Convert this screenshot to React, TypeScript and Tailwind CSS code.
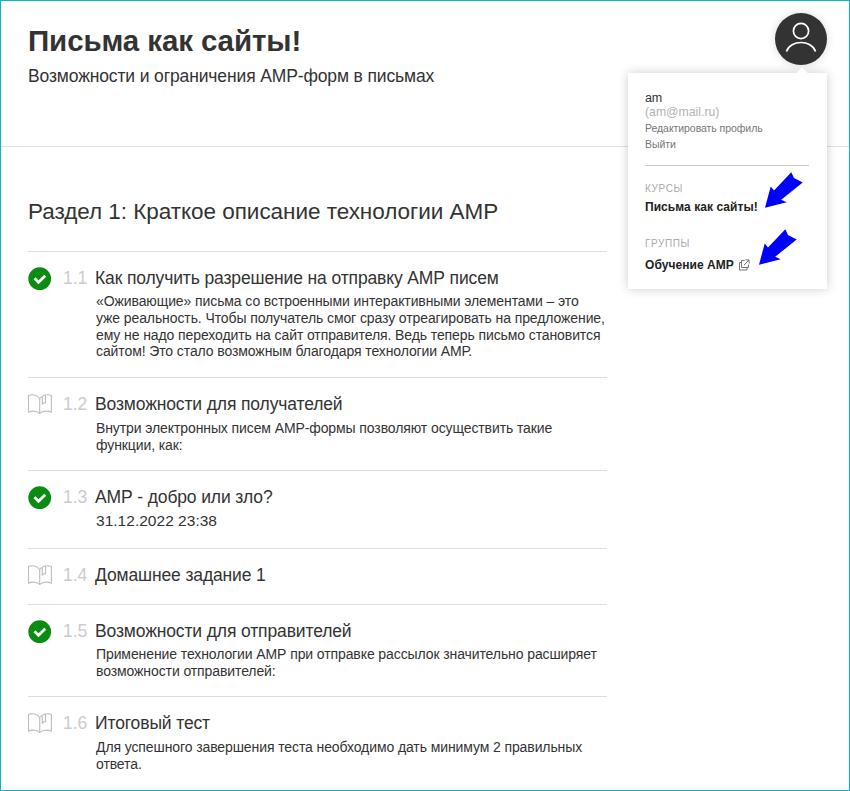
import React from "react";

type Line = { text: string; cls: string };
type Lesson = { num: string; title: string; done: boolean; rowCls: string; lines: Line[] };

const lessons: Lesson[] = [
  {
    num: "1.1",
    title: "Как получить разрешение на отправку АМР писем",
    done: true,
    rowCls: "h-[126px]",
    lines: [
      { text: "«Оживающие» письма со встроенными интерактивными элементами – это", cls: "h-[17px]" },
      { text: "уже реальность. Чтобы получатель смог сразу отреагировать на предложение,", cls: "h-[17px]" },
      { text: "ему не надо переходить на сайт отправителя. Ведь теперь письмо становится", cls: "h-[16px]" },
      { text: "сайтом! Это стало возможным благодаря технологии АМР.", cls: "h-[16px]" },
    ],
  },
  {
    num: "1.2",
    title: "Возможности для получателей",
    done: false,
    rowCls: "h-[93px]",
    lines: [
      { text: "Внутри электронных писем АМР-формы позволяют осуществить такие", cls: "h-[18px] pt-px" },
      { text: "функции, как:", cls: "h-[16px]" },
    ],
  },
  {
    num: "1.3",
    title: "АМР - добро или зло?",
    done: true,
    rowCls: "h-[78px]",
    lines: [{ text: "31.12.2022 23:38", cls: "h-[18px] pt-px text-[15.500px] tracking-[0.02px]" }],
  },
  { num: "1.4", title: "Домашнее задание 1", done: false, rowCls: "h-[56px]", lines: [] },
  {
    num: "1.5",
    title: "Возможности для отправителей",
    done: true,
    rowCls: "h-[92px]",
    lines: [
      { text: "Применение технологии АМР при отправке рассылок значительно расширяет", cls: "h-[17px]" },
      { text: "возможности отправителей:", cls: "h-[16px]" },
    ],
  },
  {
    num: "1.6",
    title: "Итоговый тест",
    done: false,
    rowCls: "h-[92px]",
    lines: [
      { text: "Для успешного завершения теста необходимо дать минимум 2 правильных", cls: "h-[18px] pt-px" },
      { text: "ответа.", cls: "h-[16px]" },
    ],
  },
];

function DoneIcon() {
  return (
    <svg className="mt-[15px] block" width="24" height="24" viewBox="0 0 24 24">
      <circle cx="11.7" cy="11.7" r="11.4" fill="#0a8c12" />
      <path d="M6.500 11.300l4 4 6.700-6.600" fill="none" stroke="#fff" strokeWidth="2.700" />
    </svg>
  );
}

function BookIcon() {
  return (
    <svg className="ml-[-1px] mt-[15px] block" width="26" height="24" viewBox="0 0 26 24" fill="none" stroke="#bdbdbd" strokeWidth="1.1" strokeLinejoin="round">
      <path d="M12.700 5.500C10.500 2 5 .8 1.500 2.500v16.800C5 17.400 10.500 18 12.700 20.500 15 18 20.500 17.400 24.400 19.300V2.500C20.500 .8 15 2 12.700 5.500z" />
      <path d="M12.700 5.500v15.200M15.300 3.200v8.100l1.600-1.600H18.500V2" />
    </svg>
  );
}

function Arrow({ className }: { className: string }) {
  return (
    <svg className={className} width="40" height="38" viewBox="0 0 40 38">
      <path d="M1 36.700L6.700 15.500 10 19.500 27.300 1.200 30 7 38.700 11.600 17.200 28.700 22.700 31.300z" fill="#0000fe" />
    </svg>
  );
}

function ProfileMenu() {
  return (
    <div className="absolute left-[627px] top-[72px] h-[216px] w-[199px] bg-white px-[17px] shadow-[0_0_10px_rgba(0,0,0,0.2)]">
      <div className="absolute right-[21px] top-[-4px] size-[8px] rotate-45 bg-white" />
      <div className="mt-[17px] h-[15px] text-[12.500px] leading-[17px] tracking-[-0.1px] text-[#333]">am</div>
      <div className="h-[15px] text-[12.250px] leading-[14px] text-[#b3b3b3]">(am@mail.ru)</div>
      <div className="h-[16px] text-[10.500px] leading-[17px] tracking-[-0.06px] text-[#777]">Редактировать профиль</div>
      <div className="h-[16px] text-[10.500px] leading-[17px] tracking-[-0.06px] text-[#777]">Выйти</div>
      <div className="mt-[13px] h-px w-[164px] bg-[#ccc]" />
      <div className="mt-[16px] h-[12px] text-[10px] leading-[13px] tracking-[0.6px] text-[#aaa]">КУРСЫ</div>
      <div className="mt-[6px] h-[14px] text-[12px] font-bold leading-[14px] tracking-[0.06px] text-[#222]">Письма как сайты!</div>
      <div className="mt-[24px] h-[12px] text-[10px] leading-[12px] tracking-[0.6px] text-[#aaa]">ГРУППЫ</div>
      <div className="mt-[8px] flex h-[14px] items-center gap-[4px] text-[12px] font-bold leading-[14px] tracking-[0.06px] text-[#222]">
        <span>Обучение АМР</span>
        <svg width="12" height="12" viewBox="0 0 12 12" fill="none" stroke="#777" strokeWidth="1">
          <path d="M6.500 1.500H3.500v7h7V5.500M7.500 .9h3.600v3.600M11 1L6 6M3.500 3.500H1.500v7.500h7.500V8.500" />
        </svg>
      </div>
    </div>
  );
}

export default function App() {
  return (
    <div className="relative h-[791px] w-[850px] overflow-hidden whitespace-nowrap border border-[#12b0d3] bg-white font-['Liberation_Sans',Arial,sans-serif] text-[#333]">
      <header className="flex h-[146px] justify-between border-b border-[#e0e0e0] pl-[27px] pr-[22px]">
        <div>
          <h1 className="mt-[22px] text-[29.500px] font-bold leading-[36px] tracking-[-0.1px]">Письма как сайты!</h1>
          <p className="mt-[7px] text-[17.500px] leading-[20px] tracking-[-0.13px]">Возможности и ограничения АМР-форм в письмах</p>
        </div>
        <div className="mt-[12px] size-[52px] rounded-full bg-[#333] shadow-[0_0_10px_rgba(0,0,0,0.15)]">
          <svg width="52" height="52" viewBox="0 0 52 52" fill="none" stroke="#fff" strokeWidth="1.700">
            <circle cx="26" cy="18" r="7.600" />
            <path d="M11.500 38.500C15.500 26.500 36.500 26.500 40.500 38.500" />
          </svg>
        </div>
      </header>
      <main className="w-[606px] pl-[27px]">
        <h2 className="h-[104px] pt-[52px] text-[22.500px] leading-[26px] tracking-[-0.04px]">Раздел 1: Краткое описание технологии АМР</h2>
        {lessons.map((l) => (
          <section key={l.num} className={`flex border-t border-[#dedede] ${l.rowCls}`}>
            <div className="w-[35px] shrink-0">{l.done ? <DoneIcon /> : <BookIcon />}</div>
            <div className="w-[32px] shrink-0 pt-[16px] text-[17.500px] leading-[21px] tracking-[-0.1px] text-[#ccc]">{l.num}</div>
            <div>
              <h3 className="pt-[16px] text-[17.500px] leading-[21px] tracking-[-0.13px]">{l.title}</h3>
              <div className="ml-px mt-[4px] text-[14px] leading-[16px] tracking-[-0.1px]">
                {l.lines.map((t) => (
                  <div key={t.text} className={t.cls}>{t.text}</div>
                ))}
              </div>
            </div>
          </section>
        ))}
      </main>
      <ProfileMenu />
      <Arrow className="absolute left-[763px] top-[170px]" />
      <Arrow className="absolute left-[757px] top-[227px]" />
    </div>
  );
}
